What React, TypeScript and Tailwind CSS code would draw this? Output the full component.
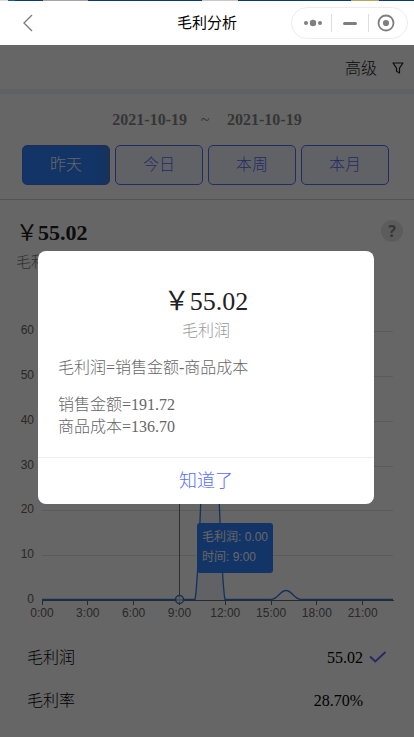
import { Fragment } from "react";

const YUAN = "\uFFE5";

const RANGES = ["昨天", "今日", "本周", "本月"];

const METRICS = [
  { label: "毛利润", value: "55.02", active: true },
  { label: "毛利率", value: "28.70%", active: false },
];

const Y_TICKS = [0, 10, 20, 30, 40, 50, 60];
const X_TICKS = [0, 3, 6, 9, 12, 15, 18, 21];

const hourX = (hour: number) => 42.5 + hour * 15.27;
const valueY = (value: number) => Math.round(320 - value * 4.48) + 0.5;

const BackIcon = () => (
  <svg width="12" height="18" viewBox="0 0 12 18" fill="none">
    <path d="M10 1L2 9L10 17" stroke="#7f7f7f" strokeWidth="1.4" />
  </svg>
);

const FilterIcon = () => (
  <svg width="12" height="12" viewBox="0 0 12 12" fill="none">
    <path d="M1 1H11L7.5 6.2V11L4.5 9.3V6.2L1 1Z" stroke="#222" strokeWidth="1.2" strokeLinejoin="round" />
  </svg>
);

const CheckIcon = () => (
  <svg width="18" height="12" viewBox="0 0 18 12" fill="none">
    <path d="M1 5.5L6.3 10.5L16.5 1" stroke="#5768f8" strokeWidth="1.9" />
  </svg>
);

const Capsule = () => (
  <div className="flex h-8 w-[117px] items-center rounded-full border border-[#ededed]">
    <div className="flex flex-1 items-center justify-center pl-0.5">
      <svg width="20" height="8" viewBox="0 0 20 8" fill="#7f7f7f">
        <circle cx="3" cy="4" r="2" />
        <circle cx="10" cy="4" r="3.2" />
        <circle cx="17" cy="4" r="2" />
      </svg>
    </div>
    <div className="h-[18px] w-px bg-[#dedede]" />
    <div className="flex w-9 items-center justify-center">
      <div className="h-[3px] w-3.5 rounded-full bg-[#7f7f7f]" />
    </div>
    <div className="h-[18px] w-px bg-[#dedede]" />
    <div className="flex w-[38px] items-center pl-2">
      <svg width="18" height="18" viewBox="0 0 18 18" fill="none">
        <circle cx="9" cy="9" r="7.5" stroke="#7f7f7f" strokeWidth="1.8" />
        <circle cx="9" cy="9" r="3.1" fill="#7f7f7f" />
      </svg>
    </div>
  </div>
);

const NavBar = () => (
  <header className="h-[45px]">
    <div className="flex h-px">
      <div className="w-2 bg-[#ddd]" />
      <div className="w-[7px] bg-[#1e5a94]" />
      <div className="w-7 bg-[#0b3a70]" />
      <div className="w-[45px] bg-[#a8a4a4]" />
      <div className="w-[114px] bg-[#0b3a70]" />
      <div className="w-9 bg-[#c8c8c8]" />
      <div className="w-[113px] bg-[#0b3a70]" />
      <div className="w-[28px] bg-[#b5a75c]" />
      <div className="flex-1 bg-[#0b3a70]" />
    </div>
    <div className="grid h-11 grid-cols-[1fr_auto_1fr] items-center bg-white pr-1.5 pl-[22px] font-['Liberation_Sans','Noto_Sans_CJK_SC',sans-serif]">
      <BackIcon />
      <h1 className="mr-4 text-[15px] font-normal text-black">毛利分析</h1>
      <div className="flex justify-end">
        <Capsule />
      </div>
    </div>
  </header>
);

const ProfitChart = () => (
  <div className="relative h-[344px]">
    <svg width="414" height="344" viewBox="0 0 414 344" fontFamily="'Liberation Sans', sans-serif" fontSize="12" fontWeight="400" fill="#666">
      {Y_TICKS.map((tick) => (
        <Fragment key={tick}>
          {tick > 0 && <path d={`M42 ${valueY(tick)}H393`} stroke="#e4e4e8" />}
          <text x="34" y={valueY(tick) + 2} textAnchor="end">
            {tick}
          </text>
        </Fragment>
      ))}
      <path d="M179.5 0V321" stroke="#777" />
      <path
        d="M42 319.5H195C201 290 203 73 210 73S219 290 225 319.5H271C278 319 280 310.5 286 310.5S294 319 301 319.5H393"
        stroke="#2d7bea"
        strokeWidth="1.3"
        fill="none"
      />
      <path d="M195 320C201 290 203 73 210 73S219 290 225 320Z" fill="#3d8bff" fillOpacity=".08" />
      <path d="M42 320.5H394" stroke="#666" />
      {X_TICKS.map((tick) => (
        <Fragment key={tick}>
          <path d={`M${Math.round(hourX(tick)) - 0.5} 320V325`} stroke="#666" />
          <text x={hourX(tick) - 0.5} y="337" textAnchor="middle">
            {tick}:00
          </text>
        </Fragment>
      ))}
      <circle cx="179.5" cy="319.5" r="4" fill="#fff" fillOpacity=".6" stroke="#3d78c8" strokeWidth="1.5" />
    </svg>
    <div className="absolute top-[243px] left-[197px] h-[50px] w-[76px] rounded-[3px] bg-[#2d82fe] pt-1 pl-[5px] font-['Liberation_Sans','Noto_Sans_CJK_SC',sans-serif] text-xs leading-5 font-normal whitespace-nowrap text-white">
      <div>毛利润: 0.00</div>
      <div>时间: 9:00</div>
    </div>
  </div>
);

const ProfitDialog = () => (
  <div className="absolute inset-x-0 top-[45px] bottom-0 bg-black/60">
    <div className="mt-[206px] ml-[38px] flex h-[253px] w-[336px] flex-col rounded-lg bg-white">
      <div className="h-[206px] px-5 pt-[33px]">
        <div className="h-9 text-center text-[26px] leading-9 text-[#222]">
          <span className="font-normal">{YUAN}</span>55.02
        </div>
        <div className="text-center text-base leading-[22px] text-[#999]">毛利润</div>
        <div className="mt-[15px] text-base leading-[22px] text-[#666]">
          <p>毛利润=销售金额-商品成本</p>
          <p className="mt-[15px]">销售金额=191.72</p>
          <p>商品成本=136.70</p>
        </div>
      </div>
      <button type="button" className="flex-1 border-t border-[#eee] text-lg leading-none text-[#586cff]">
        知道了
      </button>
    </div>
  </div>
);

export default function App() {
  return (
    <div className="relative h-[737px] w-[414px] overflow-hidden bg-white font-['Liberation_Serif','Noto_Sans_CJK_SC',serif] font-light text-[#222]">
      <NavBar />

      <div className="flex h-11 items-center justify-end gap-[15px] pt-0.5 pr-[10px]">
        <span className="pt-0.5 text-base">高级</span>
        <FilterIcon />
      </div>
      <div className="h-[5px] bg-[#f0f2fc]" />

      <section className="h-[106px] border-b border-[#d0d0d0] pt-4">
        <div className="flex h-5 items-center justify-center text-base font-bold text-[#888]">
          <span>2021-10-19</span>
          <span className="w-10 pr-1 text-center font-normal">~</span>
          <span>2021-10-19</span>
        </div>
        <div className="mt-[15px] flex gap-[5px] pl-[22px]">
          {RANGES.map((range, index) => (
            <button
              key={range}
              type="button"
              className={
                index === 0
                  ? "h-10 w-[88px] rounded-[5px] border border-[#586cd0] bg-linear-to-r from-[#2d82fe] from-85% to-[#3c7fe0] text-base text-white"
                  : "h-10 w-[88px] rounded-[5px] border border-[#586cff] bg-[#f2f4ff] text-base text-[#586cff]"
              }
            >
              {range}
            </button>
          ))}
        </div>
      </section>

      <section className="flex h-20 justify-between pt-5 pr-[11px] pl-4">
        <div>
          <div className="-mt-px h-7 text-[22px] leading-7 font-bold">
            <span className="font-normal">{YUAN}</span>55.02
          </div>
          <div className="mt-[3px] text-[15px] leading-6 text-[#777]">毛利润</div>
        </div>
        <div className="flex size-[22px] items-center justify-center rounded-full bg-[#e6e6e6] font-['Noto_Sans',sans-serif] text-base font-bold text-[#888]">
          ?
        </div>
      </section>

      <ProfitChart />

      <section className="border-b border-[#ddd] pt-3 pb-4 text-base text-black">
        {METRICS.map((metric) => (
          <div key={metric.label} className="flex h-[43px] items-center pr-[27px] pl-[27px]">
            <span className="flex-1">{metric.label}</span>
            <span className="mr-1.5">{metric.value}</span>
            <span className="w-[18px] pb-0.5">{metric.active && <CheckIcon />}</span>
          </div>
        ))}
      </section>

      <ProfitDialog />
    </div>
  );
}
